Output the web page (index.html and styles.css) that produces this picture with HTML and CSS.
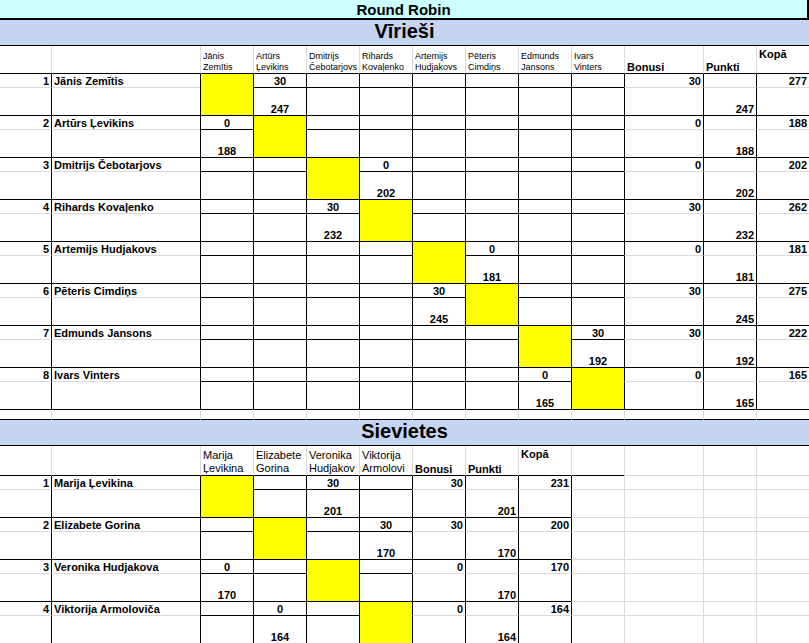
FILE: index.html
```html
<!DOCTYPE html>
<html lang="lv">
<head>
<meta charset="utf-8">
<title>Round Robin</title>
<link rel="stylesheet" href="styles.css">
</head>
<body>
<div class="title">Round Robin</div>
<div class="sec">Vīrieši</div>
<div class="sheet men">
  <div class="c a b"></div><div class="c b"></div>
  <div class="c b hs">Jānis<br>Zemītis</div>
  <div class="c b hs">Artūrs<br>Ļevikins</div>
  <div class="c b hs">Dmitrijs<br>Čebotarjovs</div>
  <div class="c b hs">Rihards<br>Kovaļenko</div>
  <div class="c b hs">Artemijs<br>Hudjakovs</div>
  <div class="c b hs">Pēteris<br>Cimdiņs</div>
  <div class="c b hs">Edmunds<br>Jansons</div>
  <div class="c b hs">Ivars<br>Vinters</div>
  <div class="c b hl">Bonusi</div><div class="c b hl">Punkti</div><div class="c b hl top">Kopā</div>

  <!-- 1 -->
  <div class="c a rt">1</div><div class="c k nm">Jānis Zemītis</div>
  <div class="c k b y"></div><div class="c k b ce">30</div><div class="c k b"></div><div class="c k b"></div><div class="c k b"></div><div class="c k b"></div><div class="c k b"></div><div class="c k b"></div>
  <div class="c k rt">30</div><div class="c k"></div><div class="c k rt">277</div>
  <div class="c a b"></div><div class="c k b"></div>
  <div class="c k b ce">247</div><div class="c k b"></div><div class="c k b"></div><div class="c k b"></div><div class="c k b"></div><div class="c k b"></div><div class="c k b"></div>
  <div class="c k b"></div><div class="c k b rt">247</div><div class="c k b"></div>

  <!-- 2 -->
  <div class="c a rt">2</div><div class="c k nm">Artūrs Ļevikins</div>
  <div class="c k b ce">0</div><div class="c k b y"></div><div class="c k b"></div><div class="c k b"></div><div class="c k b"></div><div class="c k b"></div><div class="c k b"></div><div class="c k b"></div>
  <div class="c k rt">0</div><div class="c k"></div><div class="c k rt">188</div>
  <div class="c a b"></div><div class="c k b"></div>
  <div class="c k b ce">188</div><div class="c k b"></div><div class="c k b"></div><div class="c k b"></div><div class="c k b"></div><div class="c k b"></div><div class="c k b"></div>
  <div class="c k b"></div><div class="c k b rt">188</div><div class="c k b"></div>

  <!-- 3 -->
  <div class="c a rt">3</div><div class="c k nm">Dmitrijs Čebotarjovs</div>
  <div class="c k b"></div><div class="c k b"></div><div class="c k b y"></div><div class="c k b ce">0</div><div class="c k b"></div><div class="c k b"></div><div class="c k b"></div><div class="c k b"></div>
  <div class="c k rt">0</div><div class="c k"></div><div class="c k rt">202</div>
  <div class="c a b"></div><div class="c k b"></div>
  <div class="c k b"></div><div class="c k b"></div><div class="c k b ce">202</div><div class="c k b"></div><div class="c k b"></div><div class="c k b"></div><div class="c k b"></div>
  <div class="c k b"></div><div class="c k b rt">202</div><div class="c k b"></div>

  <!-- 4 -->
  <div class="c a rt">4</div><div class="c k nm">Rihards Kovaļenko</div>
  <div class="c k b"></div><div class="c k b"></div><div class="c k b ce">30</div><div class="c k b y"></div><div class="c k b"></div><div class="c k b"></div><div class="c k b"></div><div class="c k b"></div>
  <div class="c k rt">30</div><div class="c k"></div><div class="c k rt">262</div>
  <div class="c a b"></div><div class="c k b"></div>
  <div class="c k b"></div><div class="c k b"></div><div class="c k b ce">232</div><div class="c k b"></div><div class="c k b"></div><div class="c k b"></div><div class="c k b"></div>
  <div class="c k b"></div><div class="c k b rt">232</div><div class="c k b"></div>

  <!-- 5 -->
  <div class="c a rt">5</div><div class="c k nm">Artemijs Hudjakovs</div>
  <div class="c k b"></div><div class="c k b"></div><div class="c k b"></div><div class="c k b"></div><div class="c k b y"></div><div class="c k b ce">0</div><div class="c k b"></div><div class="c k b"></div>
  <div class="c k rt">0</div><div class="c k"></div><div class="c k rt">181</div>
  <div class="c a b"></div><div class="c k b"></div>
  <div class="c k b"></div><div class="c k b"></div><div class="c k b"></div><div class="c k b"></div><div class="c k b ce">181</div><div class="c k b"></div><div class="c k b"></div>
  <div class="c k b"></div><div class="c k b rt">181</div><div class="c k b"></div>

  <!-- 6 -->
  <div class="c a rt">6</div><div class="c k nm">Pēteris Cimdiņs</div>
  <div class="c k b"></div><div class="c k b"></div><div class="c k b"></div><div class="c k b"></div><div class="c k b ce">30</div><div class="c k b y"></div><div class="c k b"></div><div class="c k b"></div>
  <div class="c k rt">30</div><div class="c k"></div><div class="c k rt">275</div>
  <div class="c a b"></div><div class="c k b"></div>
  <div class="c k b"></div><div class="c k b"></div><div class="c k b"></div><div class="c k b"></div><div class="c k b ce">245</div><div class="c k b"></div><div class="c k b"></div>
  <div class="c k b"></div><div class="c k b rt">245</div><div class="c k b"></div>

  <!-- 7 -->
  <div class="c a rt">7</div><div class="c k nm">Edmunds Jansons</div>
  <div class="c k b"></div><div class="c k b"></div><div class="c k b"></div><div class="c k b"></div><div class="c k b"></div><div class="c k b"></div><div class="c k b y"></div><div class="c k b ce">30</div>
  <div class="c k rt">30</div><div class="c k"></div><div class="c k rt">222</div>
  <div class="c a b"></div><div class="c k b"></div>
  <div class="c k b"></div><div class="c k b"></div><div class="c k b"></div><div class="c k b"></div><div class="c k b"></div><div class="c k b"></div><div class="c k b ce">192</div>
  <div class="c k b"></div><div class="c k b rt">192</div><div class="c k b"></div>

  <!-- 8 -->
  <div class="c a rt">8</div><div class="c k nm">Ivars Vinters</div>
  <div class="c k b"></div><div class="c k b"></div><div class="c k b"></div><div class="c k b"></div><div class="c k b"></div><div class="c k b"></div><div class="c k b ce">0</div><div class="c k b y"></div>
  <div class="c k rt">0</div><div class="c k"></div><div class="c k rt">165</div>
  <div class="c a b"></div><div class="c k b"></div>
  <div class="c k b"></div><div class="c k b"></div><div class="c k b"></div><div class="c k b"></div><div class="c k b"></div><div class="c k b"></div><div class="c k b ce">165</div>
  <div class="c k b"></div><div class="c k b rt">165</div><div class="c k b"></div>

  <!-- empty spacer row -->
  <div class="c a b"></div><div class="c b"></div><div class="c b"></div><div class="c b"></div><div class="c b"></div><div class="c b"></div><div class="c b"></div><div class="c b"></div><div class="c b"></div><div class="c b"></div><div class="c b"></div><div class="c b"></div><div class="c b"></div>
</div>

<div class="sec">Sievietes</div>
<div class="sheet women">
  <div class="c a b"></div><div class="c b"></div>
  <div class="c b hw">Marija<br>Ļevikina</div>
  <div class="c b hw">Elizabete<br>Gorina</div>
  <div class="c b hw">Veronika<br>Hudjakov</div>
  <div class="c b hw">Viktorija<br>Armolovi</div>
  <div class="c b hl">Bonusi</div><div class="c b hl">Punkti</div><div class="c b hl top">Kopā</div>
  <div class="c b"></div><div class="c"></div><div class="c"></div><div class="c"></div>

  <!-- 1 -->
  <div class="c a rt">1</div><div class="c k nm">Marija Ļevikina</div>
  <div class="c k b y"></div><div class="c k b"></div><div class="c k b ce">30</div><div class="c k b"></div>
  <div class="c k rt">30</div><div class="c k"></div><div class="c k rt">231</div><div class="c k"></div><div class="c"></div><div class="c"></div><div class="c"></div>
  <div class="c a b"></div><div class="c k b"></div>
  <div class="c k b"></div><div class="c k b ce">201</div><div class="c k b"></div>
  <div class="c k b"></div><div class="c k b rt">201</div><div class="c k b"></div><div class="c k"></div><div class="c"></div><div class="c"></div><div class="c"></div>

  <!-- 2 -->
  <div class="c a rt">2</div><div class="c k nm">Elizabete Gorina</div>
  <div class="c k b"></div><div class="c k b y"></div><div class="c k b"></div><div class="c k b ce">30</div>
  <div class="c k rt">30</div><div class="c k"></div><div class="c k rt">200</div><div class="c k"></div><div class="c"></div><div class="c"></div><div class="c"></div>
  <div class="c a b"></div><div class="c k b"></div>
  <div class="c k b"></div><div class="c k b"></div><div class="c k b ce">170</div>
  <div class="c k b"></div><div class="c k b rt">170</div><div class="c k b"></div><div class="c k"></div><div class="c"></div><div class="c"></div><div class="c"></div>

  <!-- 3 -->
  <div class="c a rt">3</div><div class="c k nm">Veronika Hudjakova</div>
  <div class="c k b ce">0</div><div class="c k b"></div><div class="c k b y"></div><div class="c k b"></div>
  <div class="c k rt">0</div><div class="c k"></div><div class="c k rt">170</div><div class="c k"></div><div class="c"></div><div class="c"></div><div class="c"></div>
  <div class="c a b"></div><div class="c k b"></div>
  <div class="c k b ce">170</div><div class="c k b"></div><div class="c k b"></div>
  <div class="c k b"></div><div class="c k b rt">170</div><div class="c k b"></div><div class="c k"></div><div class="c"></div><div class="c"></div><div class="c"></div>

  <!-- 4 -->
  <div class="c a rt">4</div><div class="c k nm">Viktorija Armoloviča</div>
  <div class="c k b"></div><div class="c k b ce">0</div><div class="c k b"></div><div class="c k b y"></div>
  <div class="c k rt">0</div><div class="c k"></div><div class="c k rt">164</div><div class="c k"></div><div class="c"></div><div class="c"></div><div class="c"></div>
  <div class="c a b"></div><div class="c k b"></div>
  <div class="c k b"></div><div class="c k b ce">164</div><div class="c k b"></div>
  <div class="c k b"></div><div class="c k b rt">164</div><div class="c k b"></div><div class="c k"></div><div class="c"></div><div class="c"></div><div class="c"></div>
</div>
</body>
</html>
```
FILE: styles.css
```css
html, body {
  margin: 0;
  padding: 0;
  overflow: hidden;
}
body {
  font-family: "Liberation Sans", Arial, sans-serif;
  color: #000;
  background: #fff;
  width: 809px;
}
.title {
  height: 20px;
  box-sizing: border-box;
  background: #ccffff;
  border-right: 2px solid #000;
  border-bottom: 2px solid #000;
  text-align: center;
  font-weight: bold;
  font-size: 15px;
  line-height: 17px;
  padding-top: 1px;
}
.sec {
  height: 26px;
  box-sizing: border-box;
  background: #c5d4f0;
  border-bottom: 1px solid #000;
  text-align: center;
  font-weight: bold;
  font-size: 20px;
  line-height: 22px;
}
.sheet {
  display: grid;
  grid-template-columns: 51px 149px repeat(8, 53px) 79px 53px 53px;
}
.men {
  grid-template-rows: 28px repeat(8, 14px 28px) 10px;
}
.women {
  grid-template-rows: 30px repeat(4, 14px 28px);
}
.c {
  box-sizing: border-box;
  border-left: 1px solid #dadada;
  border-bottom: 1px solid #dadada;
  display: flex;
  align-items: flex-end;
  font-size: 11px;
  line-height: 12px;
  font-weight: bold;
  overflow: hidden;
  white-space: nowrap;
  min-width: 0;
}
.a { border-left: 0; }
.k { border-left-color: #000; }
.b { border-bottom-color: #000; }
.y {
  background: #ffff00;
  grid-row: span 2;
}
.rt {
  justify-content: flex-end;
  padding-right: 2px;
}
.ce { justify-content: center; }
.nm { padding-left: 2px; }
.hs {
  font-weight: normal;
  font-size: 9px;
  line-height: 11px;
  padding-left: 2px;
  color: #000;
}
.hw {
  font-weight: normal;
  font-size: 11px;
  line-height: 13px;
  padding-left: 2px;
}
.hl { padding-left: 2px; }
.top {
  align-items: flex-start;
  padding-top: 2px;
}
```
